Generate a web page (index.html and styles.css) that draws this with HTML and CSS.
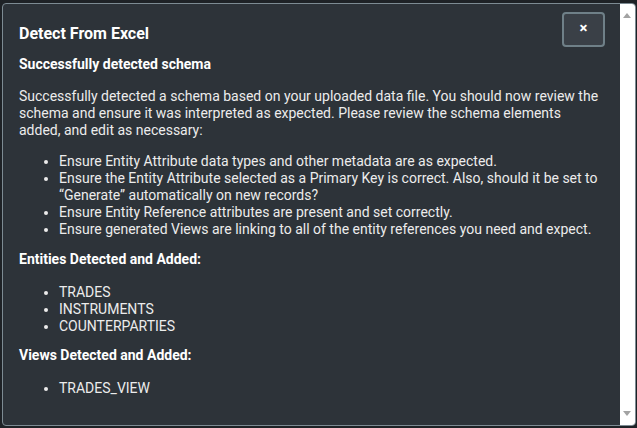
FILE: index.html
```html
<!DOCTYPE html>
<html>
<head>
<meta charset="utf-8">
<link rel="stylesheet" href="styles.css">
</head>
<body>
<div class="modal">
  <div class="content">
    <div class="header">
      <h1 class="title">Detect From Excel</h1>
      <button class="close">×</button>
    </div>
    <h2 class="sub">Successfully detected schema</h2>
    <p class="para">Successfully detected a schema based on your uploaded data file. You should now review the schema and ensure it was interpreted as expected. Please review the schema elements added, and edit as necessary:</p>
    <ul class="list">
      <li>Ensure Entity Attribute data types and other metadata are as expected.</li>
      <li>Ensure the Entity Attribute selected as a Primary Key is correct. Also, should it be set to “Generate” automatically on new records?</li>
      <li>Ensure Entity Reference attributes are present and set correctly.</li>
      <li>Ensure generated Views are linking to all of the entity references you need and expect.</li>
    </ul>
    <h2 class="sub">Entities Detected and Added:</h2>
    <ul class="list">
      <li>TRADES</li>
      <li>INSTRUMENTS</li>
      <li>COUNTERPARTIES</li>
    </ul>
    <h2 class="sub">Views Detected and Added:</h2>
    <ul class="list">
      <li>TRADES_VIEW</li>
    </ul>
  </div>
  <div class="scrollbar">
    <span class="arrow up"></span>
    <span class="arrow down"></span>
  </div>
</div>
</body>
</html>
```

FILE: styles.css
```css
html, body {
  margin: 0;
  padding: 0;
  background: #1e2226;
  height: 428px;
  overflow: hidden;
}
body {
  padding: 3px 0 0 2px;
  box-sizing: border-box;
  font-family: Roboto, "Liberation Sans", sans-serif;
}
.modal {
  width: 634px;
  height: 423px;
  box-sizing: border-box;
  border: 1px solid #7d8b93;
  border-radius: 4px;
  background: #2d3339;
  display: flex;
  overflow: hidden;
}
.content {
  flex: 1;
  padding: 8px 15px 0 16px;
  color: #ececec;
  font-size: 14px;
  line-height: 17.2px;
}
.header {
  display: flex;
  justify-content: space-between;
  align-items: flex-start;
}
.title {
  margin: 12px 0 0 0;
  font-size: 16px;
  line-height: 20px;
  font-weight: 700;
  color: #ffffff;
}
.close {
  width: 43px;
  height: 35px;
  margin: 0;
  border: 2px solid #6f8088;
  border-radius: 4px;
  background: #3a4047;
  color: #ffffff;
  font-family: Roboto, "Liberation Sans", sans-serif;
  font-size: 15px;
  font-weight: 700;
  padding: 0 0 3px 0;
}
.sub {
  margin: 9px 0 0 0;
  font-size: 14px;
  line-height: 17px;
  font-weight: 700;
  color: #ffffff;
}
.para {
  margin: 15px 0 0 0;
}
.list {
  margin: 13px 0 0 0;
  padding-left: 40px;
}
.sub + .list {
  margin-top: 16px;
}
.list + .sub {
  margin-top: 12px;
}
.list li {
  margin: 0;
}
.scrollbar {
  width: 15px;
  background: #ffffff;
  position: relative;
  flex: none;
}
.arrow {
  position: absolute;
  left: 3px;
  width: 0;
  height: 0;
  border-left: 4.5px solid transparent;
  border-right: 4.5px solid transparent;
}
.arrow.up {
  top: 9px;
  border-bottom: 5px solid #a3a3a3;
}
.arrow.down {
  bottom: 9px;
  border-top: 5px solid #a3a3a3;
}
```
